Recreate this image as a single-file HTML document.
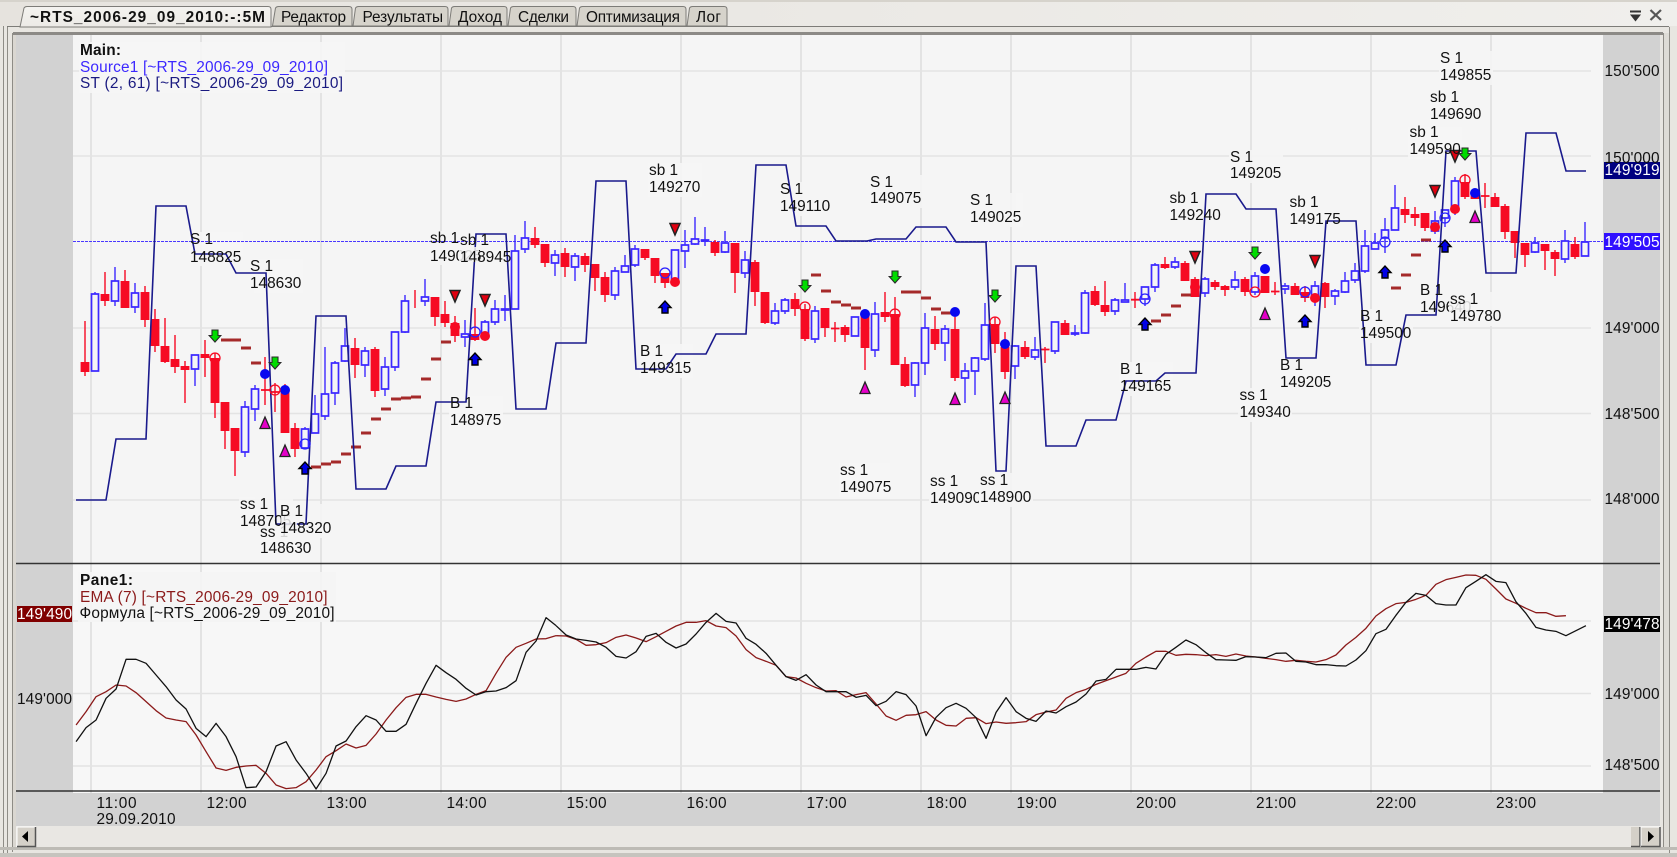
<!DOCTYPE html>
<html><head><meta charset="utf-8"><title>Chart</title>
<style>
html,body{margin:0;padding:0;background:#e8e6e1;overflow:hidden}
svg{display:block}
text{font-family:"Liberation Sans","DejaVu Sans",sans-serif;font-size:15.4px;fill:#111}
.b{font-weight:bold}
.w{fill:#fff}
</style></head><body>
<svg width="1677" height="857" viewBox="0 0 1677 857" xmlns="http://www.w3.org/2000/svg">
<defs>
<linearGradient id="bar" x1="0" x2="1" y1="0" y2="0"><stop offset="0" stop-color="#e6e3de"/><stop offset="1" stop-color="#f0efec"/></linearGradient>
<linearGradient id="act" x1="0" x2="0" y1="0" y2="1"><stop offset="0" stop-color="#f4f3f0"/><stop offset="1" stop-color="#eceae6"/></linearGradient>
<g id="ga"><path d="M-3-6H3V-.5H5.800L0 6-5.800-.5H-3Z" fill="#00dc00" stroke="#2a2a2a" stroke-width="1.100"/></g>
<g id="ba"><path d="M-3 6H3V.5H6L0-6-6 .5H-3Z" fill="#0000e6" stroke="#000" stroke-width="1.400"/></g>
<g id="dt"><path d="M-5-5.500H5L0 6Z" fill="#e00010" stroke="#222" stroke-width="1.500"/></g>
<g id="mt"><path d="M0-6L5 5.500H-5Z" fill="#e400c8" stroke="#222" stroke-width="1.300"/></g>
</defs>

<!-- window chrome -->
<rect width="1677" height="857" fill="#e8e6e1"/>
<rect width="1677" height="2" fill="#d6d3cc"/>
<rect y="2" width="1677" height="24" fill="url(#bar)"/>
<path d="M3.500 26V857M7.500 27V857M12.500 33V852" stroke="#8e8c86" fill="none"/>
<path d="M1663.500 33V850M1669.500 27V857" stroke="#8e8c86" fill="none"/>
<rect x="1664" y="33" width="5" height="817" fill="#dedcd6"/>
<rect x="13" y="33" width="3" height="815" fill="#dad7d1"/>
<path d="M7 26.500H1669" stroke="#7d7c78"/>
<rect x="13" y="32" width="1650" height="3" fill="#8c8a86"/>
<rect y="847" width="1677" height="3" fill="#bdbbb5"/>
<rect y="853" width="1677" height="4" fill="#c6c4be"/>

<!-- tabs -->
<g stroke="#7d7c78" fill="#d6d3cb">
<path d="M272.500 26L275.500 8Q276.500 6.500 278.500 6.500H349Q352 6.500 352 9.500V26Z"/>
<path d="M353 26L355.500 8Q356.500 6.500 358.500 6.500H445Q448 6.500 448 9.500V26Z"/>
<path d="M449 26L451.500 8Q452.500 6.500 454.500 6.500H504Q507 6.500 507 9.500V26Z"/>
<path d="M508 26L510.500 8Q511.500 6.500 513.500 6.500H573Q576 6.500 576 9.500V26Z"/>
<path d="M577 26L579.500 8Q580.500 6.500 582.500 6.500H683Q686 6.500 686 9.500V26Z"/>
<path d="M687 26L689.500 8Q690.500 6.500 692.500 6.500H724Q727 6.500 727 9.500V26Z"/>
<path d="M20 27L24 8Q25 6.500 27 6.500H268Q271 6.500 271 9.500V27Z" fill="url(#act)"/>
</g>
<text class="b" x="30" y="22" textLength="235">~RTS_2006-29_09_2010:-:5M</text>
<text x="281" y="22" textLength="65">Редактор</text>
<text x="362.500" y="22" textLength="80.500">Результаты</text>
<text x="458" y="22" textLength="44">Доход</text>
<text x="518" y="22" textLength="51">Сделки</text>
<text x="586" y="22" textLength="94">Оптимизация</text>
<text x="696" y="22" textLength="25">Лог</text>
<path d="M1630 10.500h11v2h-11zM1630 14.500h11l-5.500 7z" fill="#333"/>
<path d="M1650.500 10L1661 20M1661 10L1650.500 20" stroke="#555" stroke-width="2.200" fill="none"/>

<!-- panels -->
<rect x="16" y="35" width="1644" height="791" fill="#d2d2d2"/>
<rect x="73" y="35" width="1530" height="529" fill="#f5f5f5"/>
<rect x="73" y="564" width="1530" height="229" fill="#f7f7f7"/>

<!-- grid -->
<path d="M91 35V793M201 35V793M321 35V793M441 35V793M561 35V793M681 35V793M801 35V793M921 35V793M1011 35V793M1131 35V793M1251 35V793M1371 35V793M1491 35V793" stroke="#e3e3e3" stroke-width="2" fill="none"/>
<path d="M73 71H1591M73 156H1591M73 328H1591M73 413.500H1591M73 500H1591M73 621H1591M73 693.500H1591M73 766H1591" stroke="#e3e3e3" stroke-width="1.600" fill="none"/>

<!-- label backgrounds -->
<g fill="#f5f5f5" opacity=".92">
<rect x="79" y="42" width="266" height="51"/><rect x="78" y="572" width="258" height="50"/>
<rect x="189" y="232" width="54" height="34"/><rect x="249" y="259" width="54" height="34"/>
<rect x="429" y="231" width="54" height="34"/><rect x="459" y="233" width="54" height="34"/>
<rect x="239" y="497" width="54" height="34"/><rect x="279" y="504" width="54" height="34"/>
<rect x="259" y="525" width="54" height="33"/><rect x="449" y="396" width="54" height="34"/>
<rect x="648" y="163" width="54" height="34"/><rect x="779" y="182" width="54" height="34"/>
<rect x="869" y="175" width="54" height="33"/><rect x="969" y="193" width="54" height="34"/>
<rect x="639" y="344" width="54" height="34"/><rect x="839" y="463" width="54" height="34"/>
<rect x="929" y="474" width="54" height="34"/><rect x="979" y="473" width="54" height="34"/>
<rect x="1439" y="51" width="54" height="34"/><rect x="1429" y="90" width="54" height="34"/>
<rect x="1408" y="125" width="54" height="34"/><rect x="1229" y="150" width="54" height="33"/>
<rect x="1168" y="191" width="54" height="34"/><rect x="1288" y="195" width="54" height="34"/>
<rect x="1119" y="362" width="54" height="34"/><rect x="1238" y="388" width="54" height="34"/>
<rect x="1279" y="358" width="54" height="34"/><rect x="1359" y="309" width="54" height="34"/>
<rect x="1419" y="283" width="54" height="34"/><rect x="1449" y="292" width="54" height="34"/>
</g>

<!-- dashed last price -->
<path d="M73 241.500H1603" stroke="#4a38ff" stroke-width="1.100" stroke-dasharray="3 1" fill="none"/>

<!-- red wicks -->
<path fill="none" stroke="#f60a23" stroke-width="1.400" d="M85 321V376M105 272V306M125 270V308M145 286V327M155 309V352M165 318V363M175 335V373M185 361V403M205 340V377M215 353V418M225 402V449M235 428V476M265 357V405M275 383V412M285 384V433M295 423V457M355 338V378M375 347V397M415 290V308M435 297V326M445 301V327M455 316V342M475 308V341M535 227V248M545 244V267M565 248V277M585 253V272M595 264V291M605 272V302M645 249V260M655 258V283M665 273V288M715 240V256M735 243V293M755 260V306M765 292V324M795 293V316M805 304V341M825 308V337M835 322V342M845 325V342M865 310V370M885 292V322M895 297V365M905 357V387M935 316V350M955 317V381M995 317V353M1005 332V379M1025 341V359M1045 347V363M1065 320V335M1095 286V306M1105 281V316M1135 292V308M1165 257V269M1185 261V281M1195 277V297M1215 280V290M1225 285V296M1245 277V296M1265 276V293M1275 282V295M1295 283V295M1305 286V302M1325 282V308M1405 197V223M1415 207V226M1425 213V231M1465 174V199M1475 190V199M1485 183V208M1495 193V207M1505 204V239M1515 231V258M1525 243V267M1545 244V270M1555 250V276M1575 237V259"/>
<!-- red bodies -->
<path fill="none" stroke="#f60a23" stroke-width="8.800" d="M85 362V372M105 294V301M125 281V308M145 292V320M155 319V346M165 346V362M175 359V367M185 366V370M205 354V358M215 358V403M225 402V431M235 428V451M285 390V433M295 428V449M355 348V365M375 349V391M435 297V317M445 314V323M455 323V336M475 334V340M535 238V245M545 244V263M565 253V267M585 256V265M595 264V278M605 277V295M645 249V258M655 258V276M665 273V283M715 242V253M735 243V273M755 262V292M765 292V323M795 299V309M805 309V339M825 308V328M845 327V335M865 314V348M885 312V317M895 314V365M905 364V386M935 329V344M955 329V378M995 324V344M1005 347V372M1025 347V357M1065 323V335M1095 291V305M1105 305V312M1165 264V268M1185 263V281M1195 279V297M1215 282V287M1225 286V290M1245 279V292M1265 276V293M1295 286V295M1305 292V298M1325 283V297M1405 209V215M1415 214V218M1425 213V228M1465 182V197M1475 193V199M1495 197V207M1505 206V232M1515 231V243M1525 243V255M1545 244V251M1555 252V259M1575 244V257"/>
<!-- red crosses -->
<path fill="none" stroke="#f60a23" stroke-width="1.800" d="M261 390h8.500M271 392h8.500M831 328.500h8.500M1041 349.500h8.500M1131 299.700h8.500M1271 291.500h8.500M1481 196h8.500"/>
<!-- blue wicks -->
<path fill="none" stroke="#3c28ff" stroke-width="1.400" d="M95 292V371M115 267V306M135 283V313M195 355V386M245 401V457M255 385V421M305 427V449M315 395V433M325 347V420M335 361V405M345 328V362M365 347V377M385 357V396M395 332V371M405 295V333M425 279V306M465 320V347M485 320V337M495 300V325M505 295V321M515 235V309M525 221V253M555 250V276M575 253V281M615 267V300M625 255V272M635 245V267M675 250V282M685 230V268M695 217V245M705 227V246M725 231V253M745 251V278M775 303V325M785 298V314M815 306V343M855 317V336M875 302V357M915 362V397M925 313V375M945 325V361M965 363V403M975 357V395M985 303V361M1015 345V379M1035 337V360M1055 322V354M1075 325V336M1085 290V334M1115 298V315M1125 283V302M1145 287V306M1155 263V292M1175 257V269M1205 277V297M1235 271V290M1255 272V295M1285 283V294M1315 281V306M1335 289V305M1345 272V293M1355 263V283M1365 230V273M1375 233V249M1385 218V253M1395 185V230M1435 211V234M1445 210V227M1455 177V215M1535 237V253M1565 230V263M1585 222V256"/>
<!-- blue bodies -->
<path fill="#f5f5f5" stroke="#3c28ff" stroke-width="1.700" d="M91.500 294H98.500V371H91.500ZM111.500 281H118.500V301H111.500ZM131.500 293H138.500V307H131.500ZM191.500 355H198.500V369H191.500ZM241.500 407H248.500V452H241.500ZM251.500 389H258.500V409H251.500ZM301.500 429H308.500V448H301.500ZM311.500 414H318.500V433H311.500ZM321.500 394H328.500V416H321.500ZM331.500 363H338.500V393H331.500ZM341.500 346H348.500V361H341.500ZM361.500 351H368.500V365H361.500ZM381.500 367H388.500V389H381.500ZM391.500 332H398.500V367H391.500ZM401.500 301H408.500V332H401.500ZM421.500 297H428.500V301H421.500ZM461.500 334H468.500V337H461.500ZM481.500 322H488.500V337H481.500ZM491.500 309H498.500V322H491.500ZM501.500 309H508.500V310H501.500ZM511.500 251H518.500V309H511.500ZM521.500 238H528.500V249H521.500ZM551.500 255H558.500V263H551.500ZM571.500 256H578.500V267H571.500ZM611.500 271H618.500V295H611.500ZM621.500 266H628.500V272H621.500ZM631.500 249H638.500V265H631.500ZM671.500 250H678.500V282H671.500ZM681.500 245H688.500V251H681.500ZM691.500 239H698.500V244H691.500ZM701.500 240H708.500V241H701.500ZM721.500 243H728.500V252H721.500ZM741.500 260H748.500V273H741.500ZM771.500 311H778.500V323H771.500ZM781.500 300H788.500V311H781.500ZM811.500 311H818.500V339H811.500ZM851.500 317H858.500V336H851.500ZM871.500 314H878.500V350H871.500ZM911.500 363H918.500V385H911.500ZM921.500 328H928.500V363H921.500ZM941.500 329H948.500V343H941.500ZM961.500 371H968.500V378H961.500ZM971.500 358H978.500V371H971.500ZM981.500 325H988.500V359H981.500ZM1011.500 346H1018.500V366H1011.500ZM1031.500 350H1038.500V357H1031.500ZM1051.500 322H1058.500V351H1051.500ZM1071.500 333H1078.500V334H1071.500ZM1081.500 293H1088.500V333H1081.500ZM1111.500 300H1118.500V311H1111.500ZM1121.500 300H1128.500V302H1121.500ZM1141.500 287H1148.500V299H1141.500ZM1151.500 265H1158.500V287H1151.500ZM1171.500 262H1178.500V267H1171.500ZM1201.500 279H1208.500V293H1201.500ZM1231.500 280H1238.500V287H1231.500ZM1251.500 276H1258.500V292H1251.500ZM1281.500 286H1288.500V289H1281.500ZM1311.500 286H1318.500V298H1311.500ZM1331.500 291H1338.500V296H1331.500ZM1341.500 281H1348.500V292H1341.500ZM1351.500 271H1358.500V280H1351.500ZM1361.500 246H1368.500V271H1361.500ZM1371.500 243H1378.500V249H1371.500ZM1381.500 230H1388.500V238H1381.500ZM1391.500 208H1398.500V230H1391.500ZM1431.500 221H1438.500V231H1431.500ZM1441.500 210H1448.500V218H1441.500ZM1451.500 181H1458.500V207H1451.500ZM1531.500 243H1538.500V252H1531.500ZM1561.500 241H1568.500V259H1561.500ZM1581.500 242H1588.500V256H1581.500Z"/>

<!-- MA dashes -->
<path fill="none" stroke="#a52a2a" stroke-width="3" d="M221 340h10M231 340h10M241 348h10M251 363h10M311 467h10M321 464h10M331 462h10M341 454h10M351 447h10M361 433h10M371 419h10M381 409h10M391 399h10M401 398h10M411 397h10M421 379h10M431 359h10M441 342h10M811 275h10M821 291h10M831 302h10M841 305h10M851 308h10M901 292h10M911 292h10M921 298h10M931 309h10M941 313h10M1151 321h10M1161 315h10M1171 306h10M1181 295h10M1391 288h10M1401 275h10M1411 255h10M1421 240h10"/>

<!-- ST line -->
<polyline fill="none" stroke="#1a1a8c" stroke-width="1.600" points="76,500 106,500 116,439 146,439 156,206 186,206 195,254 226,254 236,273 266,273 276,524 306,524 316,316 346,316 356,489 386,489 396,466 426,466 436,402 466,402 476,234 506,234 516,409 546,409 556,343 586,343 596,181 626,181 636,369 666,369 676,354 706,354 716,334 746,334 756,165 786,165 796,226 826,226 836,241 867,241 876,239 906,239 916,227 946,227 956,242 986,242 996,471 1006,471 1016,266 1036,266 1046,446 1076,446 1086,420 1116,420 1126,381 1156,381 1165,373 1196,373 1206,194 1236,194 1246,209 1276,209 1286,358 1316,358 1326,221 1356,221 1366,365 1396,365 1406,315 1436,315 1446,151 1476,151 1486,273 1516,273 1526,133 1556,133 1566,171 1586,171"/>

<!-- dots -->
<g fill="#f60a23"><circle cx="455" cy="327" r="5"/><circle cx="485" cy="336" r="5"/><circle cx="675" cy="282" r="5"/><circle cx="1195" cy="287" r="5"/><circle cx="1315" cy="298" r="5"/><circle cx="1435" cy="227" r="5"/><circle cx="1455" cy="209" r="5"/></g>
<g fill="#0808f0"><circle cx="265" cy="374" r="5"/><circle cx="285" cy="390" r="5"/><circle cx="865" cy="314" r="5"/><circle cx="955" cy="312" r="5"/><circle cx="1005" cy="344" r="5"/><circle cx="1265" cy="269" r="5"/><circle cx="1475" cy="193" r="5"/></g>
<g fill="none" stroke="#f60a23" stroke-width="1.300"><circle cx="215" cy="358" r="5"/><circle cx="275" cy="390" r="5"/><circle cx="805" cy="307" r="5"/><circle cx="895" cy="314" r="5"/><circle cx="995" cy="322" r="5"/><circle cx="1255" cy="292" r="5"/><circle cx="1465" cy="180" r="5"/></g>
<g fill="none" stroke="#2a20ff" stroke-width="1.300"><circle cx="305" cy="444" r="5"/><circle cx="475" cy="332" r="5"/><circle cx="665" cy="273" r="5"/><circle cx="1145" cy="299" r="5"/><circle cx="1305" cy="292" r="5"/><circle cx="1385" cy="242" r="5"/><circle cx="1445" cy="218" r="5"/></g>

<!-- markers -->
<use href="#ga" x="215" y="336"/><use href="#ga" x="275" y="363"/><use href="#ga" x="805" y="286"/><use href="#ga" x="895" y="277"/><use href="#ga" x="995" y="296"/><use href="#ga" x="1255" y="253"/><use href="#ga" x="1465" y="154"/>
<use href="#dt" x="455" y="296"/><use href="#dt" x="485" y="300"/><use href="#dt" x="675" y="229"/><use href="#dt" x="1195" y="257"/><use href="#dt" x="1315" y="261"/><use href="#dt" x="1435" y="191"/><use href="#dt" x="1455" y="156"/>
<use href="#ba" x="305" y="468"/><use href="#ba" x="475" y="359"/><use href="#ba" x="665" y="307"/><use href="#ba" x="1385" y="272"/><use href="#ba" x="1445" y="246"/><use href="#ba" x="1145" y="324"/><use href="#ba" x="1305" y="321"/>
<use href="#mt" x="265" y="423"/><use href="#mt" x="285" y="451"/><use href="#mt" x="865" y="388"/><use href="#mt" x="955" y="399"/><use href="#mt" x="1005" y="398"/><use href="#mt" x="1265" y="314"/><use href="#mt" x="1475" y="217"/>

<!-- pane lines -->
<g fill="none" stroke-width="1.300" stroke-linejoin="round">
<g stroke="#8b1a1a">
<polyline vector-effect="non-scaling-stroke" transform="translate(0,560) scale(.35714,.33333)" points="213,495 241,455 269,410 297,395 325,375 353,378 381,398 409,425 437,452 465,474 493,480 521,485 549,525 577,575 605,624 633,631 661,622 689,618 717,616 745,640 773,675 801,686 829,683 857,665 885,630 913,590 941,572 969,552 997,564 1025,556 1053,522 1081,480 1109,443 1137,412 1165,403 1193,403 1221,411 1249,418 1277,424 1305,417 1333,403 1361,392 1389,340 1417,292 1445,262 1473,250 1501,237 1529,236 1557,227"/>
<polyline vector-effect="non-scaling-stroke" transform="translate(560,560) scale(.35714,.33333)" points="-11,227 17,228 45,238 73,256 101,254 129,248 157,232 185,225 213,234 241,245 269,230 297,214 325,198 353,187 381,187 409,182 437,198 465,203 493,228 521,269 549,293 577,304 605,316 633,350 661,354 689,370 717,383 745,393 773,392 801,411 829,404 857,398 885,432 913,468 941,481 969,466 997,464 1025,455 1053,480 1081,496 1109,498 1137,475 1165,473 1193,491 1221,486 1249,490 1277,488 1305,485 1333,464 1361,456 1389,450 1417,415 1445,398 1473,388 1501,373 1529,362 1557,351"/>
<polyline vector-effect="non-scaling-stroke" transform="translate(1117,560) scale(.35714,.33333)" points="-3,351 25,340 53,310 81,291 109,274 137,274 165,286 193,283 221,284 249,287 277,284 305,289 333,282 361,288 389,291 417,295 445,299 473,304 501,301 529,304 557,306 585,299 613,285 641,255 669,232 697,205 725,168 753,146 781,131 809,127 837,118 865,106 893,73 921,59 949,52 977,45 1005,46 1033,58 1061,87 1089,117 1117,130 1145,145 1173,158 1201,158 1229,169 1257,167"/>
</g>
<g stroke="#111">
<polyline vector-effect="non-scaling-stroke" transform="translate(0,560) scale(.35714,.33333)" points="213,545 241,503 269,480 297,415 325,387 353,298 381,298 409,310 437,345 465,380 493,420 521,447 549,505 577,530 605,490 633,530 661,590 689,683 717,681 745,635 773,558 801,545 829,600 857,640 885,687 913,640 941,558 969,543 997,500 1025,467 1053,480 1081,514 1109,514 1137,493 1165,430 1193,370 1221,316 1249,338 1277,358 1305,385 1333,405 1361,395 1389,393 1417,383 1445,362 1473,277 1501,243 1529,173 1557,197"/>
<polyline vector-effect="non-scaling-stroke" transform="translate(560,560) scale(.35714,.33333)" points="-11,197 17,225 45,237 73,241 101,246 129,262 157,289 185,294 213,275 241,229 269,220 297,247 325,264 353,252 381,222 409,187 437,160 465,184 493,189 521,235 549,253 577,280 605,316 633,350 661,361 689,344 717,375 745,395 773,395 801,395 829,412 857,406 885,437 913,424 941,395 969,404 997,438 1025,527 1053,472 1081,443 1109,430 1137,445 1165,473 1193,535 1221,457 1249,413 1277,455 1305,475 1333,484 1361,453 1389,459 1417,440 1445,426 1473,402 1501,363 1529,358 1557,328"/>
<polyline vector-effect="non-scaling-stroke" transform="translate(1117,560) scale(.35714,.33333)" points="-3,328 25,328 53,328 81,322 109,327 137,283 165,262 193,240 221,254 249,278 277,299 305,300 333,301 361,290 389,291 417,293 445,280 473,279 501,304 529,306 557,314 585,314 613,317 641,318 669,300 697,272 725,221 753,208 781,166 809,127 837,100 865,106 893,131 921,135 949,135 977,83 1005,64 1033,44 1061,64 1089,68 1117,125 1145,160 1173,202 1201,210 1229,214 1257,227 1285,212 1313,197"/>
</g>
</g>

<!-- separators -->
<path d="M16 563.500H1660" stroke="#333" stroke-width="1.500"/>
<path d="M16 791H1660" stroke="#111" stroke-width="1.300"/>

<!-- legends -->
<text class="b" x="80" y="55" textLength="41">Main:</text>
<text x="80" y="72" textLength="248" style="fill:#3c28ff">Source1 [~RTS_2006-29_09_2010]</text>
<text x="80" y="88" textLength="263" style="fill:#1a1a80">ST (2, 61) [~RTS_2006-29_09_2010]</text>
<text class="b" x="80" y="585" textLength="53">Pane1:</text>
<text x="80" y="602" textLength="247.500" style="fill:#8b1a1a">EMA (7) [~RTS_2006-29_09_2010]</text>
<text x="79.500" y="618" textLength="255">Формула [~RTS_2006-29_09_2010]</text>

<!-- trade labels -->
<text x="190" y="244">S 1</text><text x="190" y="262">148825</text>
<text x="250" y="271">S 1</text><text x="250" y="288">148630</text>
<text x="430" y="243">sb 1</text><text x="430" y="261">149025</text>
<rect x="459" y="247" width="20" height="15" fill="#f5f5f5" opacity=".85"/>
<text x="460" y="245">sb 1</text><text x="460" y="262">148945</text>
<text x="240" y="509">ss 1</text><text x="240" y="526">148705</text>
<rect x="281" y="514" width="16" height="14" fill="#f5f5f5" opacity=".85"/>
<text x="260" y="537">ss 1</text><text x="260" y="553">148630</text>
<rect x="280" y="525" width="9" height="14" fill="#f5f5f5" opacity=".85"/>
<text x="280" y="516">B 1</text><text x="280" y="533">148320</text>
<text x="450" y="408">B 1</text><text x="450" y="425">148975</text>
<text x="649" y="175">sb 1</text><text x="649" y="192">149270</text>
<text x="780" y="194">S 1</text><text x="780" y="211">149110</text>
<text x="870" y="187">S 1</text><text x="870" y="203">149075</text>
<text x="970" y="205">S 1</text><text x="970" y="222">149025</text>
<text x="640" y="356">B 1</text><text x="640" y="373">149315</text>
<text x="840" y="475">ss 1</text><text x="840" y="492">149075</text>
<text x="930" y="486">ss 1</text><text x="930" y="503">149090</text>
<rect x="979" y="490" width="12" height="15" fill="#f5f5f5"/>
<text x="980" y="485">ss 1</text><text x="980" y="502">148900</text>
<text x="1440" y="63">S 1</text><text x="1440" y="80">149855</text>
<text x="1430" y="102">sb 1</text><text x="1430" y="119">149690</text>
<text x="1409.500" y="137">sb 1</text><text x="1409.500" y="154">149590</text>
<text x="1230" y="162">S 1</text><text x="1230" y="178">149205</text>
<text x="1169.500" y="203">sb 1</text><text x="1169.500" y="220">149240</text>
<text x="1289.500" y="207">sb 1</text><text x="1289.500" y="224">149175</text>
<text x="1120" y="374">B 1</text><text x="1120" y="391">149165</text>
<text x="1239.500" y="400">ss 1</text><text x="1239.500" y="417">149340</text>
<text x="1280" y="370">B 1</text><text x="1280" y="387">149205</text>
<text x="1360" y="321">B 1</text><text x="1360" y="338">149500</text>
<text x="1420" y="295">B 1</text><text x="1420" y="312">149640</text>
<rect x="1449" y="299" width="22" height="15" fill="#f5f5f5" opacity=".85"/>
<text x="1450" y="304">ss 1</text><text x="1450" y="321">149780</text>

<!-- price axis -->
<rect x="1604" y="162" width="56" height="17" fill="#000080"/>
<rect x="1604" y="233" width="56" height="17" fill="#3010ff"/>
<rect x="1604" y="616" width="56" height="16" fill="#000"/>
<rect x="17" y="606" width="55" height="16" fill="#800000"/>
<g>
<text x="1604.500" y="76" textLength="55">150'500</text>
<text x="1604.500" y="163" textLength="55">150'000</text>
<text class="w" x="1604.500" y="175" textLength="55">149'919</text>
<text class="w" x="1604.500" y="247" textLength="55">149'505</text>
<text x="1604.500" y="333" textLength="55">149'000</text>
<text x="1604.500" y="419" textLength="55">148'500</text>
<text x="1604.500" y="504" textLength="55">148'000</text>
<text class="w" x="1604.500" y="629" textLength="55">149'478</text>
<text x="1604.500" y="699" textLength="55">149'000</text>
<text x="1604.500" y="770" textLength="55">148'500</text>
<text class="w" x="17" y="619" textLength="55">149'490</text>
<text x="17" y="704" textLength="55">149'000</text>
</g>

<!-- time axis -->
<text x="96.500" y="808" textLength="40">11:00</text>
<text x="96.500" y="824" textLength="79">29.09.2010</text>
<text x="206.500" y="808" textLength="40">12:00</text>
<text x="326.500" y="808" textLength="40">13:00</text>
<text x="446.500" y="808" textLength="40">14:00</text>
<text x="566.500" y="808" textLength="40">15:00</text>
<text x="686.500" y="808" textLength="40">16:00</text>
<text x="806.500" y="808" textLength="40">17:00</text>
<text x="926.500" y="808" textLength="40">18:00</text>
<text x="1016.500" y="808" textLength="40">19:00</text>
<text x="1136" y="808" textLength="40">20:00</text>
<text x="1256" y="808" textLength="40">21:00</text>
<text x="1376" y="808" textLength="40">22:00</text>
<text x="1496" y="808" textLength="40">23:00</text>

<!-- scrollbar -->
<rect x="16" y="826" width="1644" height="21" fill="#e9e7e3"/>
<rect x="17" y="827" width="19" height="20" fill="#d4d0c8"/>
<path d="M17 847V827H36" stroke="#fff" fill="none"/><path d="M17 846.500H35.500V827" stroke="#555" stroke-width="1.500" fill="none"/>
<path d="M22 836.500L28 831V842Z" fill="#000"/>
<rect x="1631" y="827" width="9" height="20" fill="#d4d0c8"/>
<path d="M1631 846.500H1640V827" stroke="#555" stroke-width="1.500" fill="none"/>
<rect x="1641" y="827" width="19" height="20" fill="#d4d0c8"/>
<path d="M1641 847V827H1660" stroke="#fff" fill="none"/><path d="M1641 846.500H1660V827" stroke="#555" stroke-width="1.500" fill="none"/>
<path d="M1654 836.500L1648 831V842Z" fill="#000"/>
</svg>
</body></html>
